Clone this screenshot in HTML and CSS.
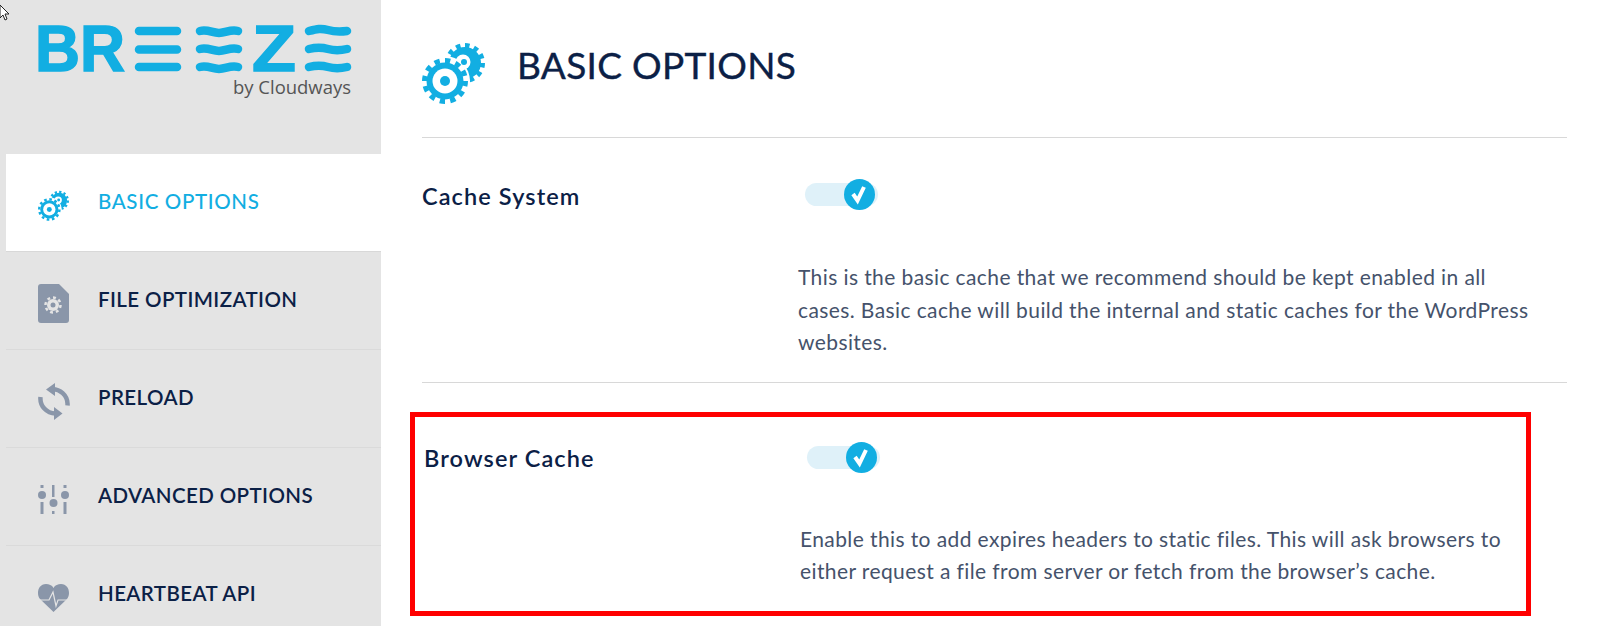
FILE: index.html
```html
<!DOCTYPE html>
<html lang="en">
<head>
    <meta charset="UTF-8">
    <title>Breeze - Basic Options</title>
    <link rel="stylesheet" href="styles.css">
</head>
<body>
    <!-- shared gear icon -->
    <svg class="defs" width="0" height="0">
        <symbol id="gears" viewBox="0 0 63 62">
            <circle cx="43" cy="21" r="16" fill="#12aee2"/>
            <circle cx="43" cy="21" r="17.500" fill="none" stroke="#12aee2" stroke-width="5" pathLength="24" stroke-dasharray="1 1"/>
            <circle cx="23" cy="39" r="25" fill="#fff"/>
            <circle cx="41" cy="20" r="7.500" fill="#fff"/>
            <circle cx="42" cy="20" r="3" fill="#12aee2"/>
            <circle cx="23" cy="39" r="18.500" fill="#12aee2"/>
            <circle cx="23" cy="39" r="20.500" fill="none" stroke="#12aee2" stroke-width="5" pathLength="24" stroke-dasharray="1 1"/>
            <circle cx="23" cy="39" r="12.500" fill="#fff"/>
            <circle cx="23" cy="39" r="5" fill="#12aee2"/>
        </symbol>
    </svg>

    <svg class="cursor" viewBox="0 0 9 17" width="9" height="17">
        <path d="M0 0v13l3-3 2 5 2-1-2-5h4z" fill="#fff" stroke="#222" stroke-width="1"/>
    </svg>

    <div class="page">
        <aside class="sidebar">
            <div class="logo">
                <svg width="328" height="96" viewBox="-8 0 328 96">
                    <text class="logo-mark" x="-3" y="63" textLength="90" lengthAdjust="spacingAndGlyphs">BR</text>
                    <g fill="none" stroke="#12aee2" stroke-width="8.5" stroke-linecap="round">
                        <path d="M101 23h38M101 41.500h38M101 59h38"/>
                        <path d="M162 23c8-2 12 2 19 2s11-4 19-2M162 41c8-2 12 2 19 2s11-4 19-2M162 59c8-2 12 2 19 2s11-4 19-2"/>
                        <path d="M271 23c8-2 12-3 19-1s11 2 19 1M271 41c8-2 12-2 19 0s11 2 19 0M271 59c8-2 12-2 19 0s11 2 19 0"/>
                    </g>
                    <text class="logo-mark" x="214" y="63" textLength="44" lengthAdjust="spacingAndGlyphs">Z</text>
                    <text class="logo-by" x="195" y="86" textLength="118" lengthAdjust="spacingAndGlyphs">by Cloudways</text>
                </svg>
            </div>
            <nav class="nav">
                <a class="nav-item active">
                    <span class="nav-icon"><svg width="31" height="31"><use href="#gears"/></svg></span>
                    <span>BASIC OPTIONS</span>
                </a>
                <a class="nav-item">
                    <span class="nav-icon">
                        <svg width="31" height="39" viewBox="0 0 31 39">
                            <path d="M3 0h18l10 10v26a3 3 0 0 1-3 3H3a3 3 0 0 1-3-3V3a3 3 0 0 1 3-3z" fill="#8a96a9"/>
                            <circle cx="15" cy="21" r="6" fill="#e4e4e4"/>
                            <circle cx="15" cy="21" r="7.500" fill="none" stroke="#e4e4e4" stroke-width="2.500" pathLength="16" stroke-dasharray="1 1"/>
                            <circle cx="15" cy="21" r="2.500" fill="#8a96a9"/>
                        </svg>
                    </span>
                    <span>FILE OPTIMIZATION</span>
                </a>
                <a class="nav-item">
                    <span class="nav-icon">
                        <svg width="32" height="39" viewBox="0 0 32 39">
                            <g fill="none" stroke="#8a96a9" stroke-width="4.500">
                                <path d="M12 7.500a15 15 0 0 1 17.500 16"/>
                                <path d="M2.500 15a15 15 0 0 0 15 16.500"/>
                            </g>
                            <path d="M8 7.500L17 1v13zM24.500 31.500L16 25v13z" fill="#8a96a9"/>
                        </svg>
                    </span>
                    <span>PRELOAD</span>
                </a>
                <a class="nav-item">
                    <span class="nav-icon">
                        <svg width="31" height="29" viewBox="0 0 31 29">
                            <g fill="#8a96a9">
                                <rect x="2.500" y="0" width="3" height="3"/>
                                <circle cx="4" cy="10" r="4"/>
                                <rect x="2.500" y="17" width="3" height="12"/>
                                <rect x="14" y="0" width="2.500" height="12"/>
                                <circle cx="15.500" cy="18" r="4"/>
                                <rect x="14" y="26" width="2.500" height="3"/>
                                <rect x="25.500" y="0" width="3" height="3"/>
                                <circle cx="27" cy="10" r="4"/>
                                <rect x="25.500" y="17" width="3" height="12"/>
                            </g>
                        </svg>
                    </span>
                    <span>ADVANCED OPTIONS</span>
                </a>
                <a class="nav-item">
                    <span class="nav-icon">
                        <svg width="31" height="28" viewBox="0 0 31 28">
                            <path d="M15.500 28L2 15C-2 10 0 0 8 0c3 0 6 1 7.500 4C17 1 20 0 23 0c8 0 10 10 6 15z" fill="#8a96a9"/>
                            <path d="M2 16h9l4-8 3 14 2-6h10" fill="none" stroke="#e4e4e4" stroke-width="1.200"/>
                        </svg>
                    </span>
                    <span>HEARTBEAT API</span>
                </a>
            </nav>
        </aside>

        <main class="content">
            <header class="head">
                <svg width="63" height="62"><use href="#gears"/></svg>
                <h1>BASIC OPTIONS</h1>
            </header>

            <section class="option">
                <div class="option-row">
                    <label class="option-name">Cache System</label>
                    <span class="toggle"><svg class="knob" width="31" height="31" viewBox="0 0 31 31"><circle cx="15.500" cy="15.500" r="15.500" fill="#12aee2"/><path d="M9 15l4.500 6.500L20 8" fill="none" stroke="#fff" stroke-width="4"/></svg></span>
                </div>
                <p class="option-desc">This is the basic cache that we recommend should be kept enabled in all cases. Basic cache will build the internal and static caches for the WordPress websites.</p>
            </section>

            <section class="option marked">
                <div class="option-row">
                    <label class="option-name">Browser Cache</label>
                    <span class="toggle"><svg class="knob" width="31" height="31" viewBox="0 0 31 31"><circle cx="15.500" cy="15.500" r="15.500" fill="#12aee2"/><path d="M9 15l4.500 6.500L20 8" fill="none" stroke="#fff" stroke-width="4"/></svg></span>
                </div>
                <p class="option-desc">Enable this to add expires headers to static files. This will ask browsers to either request a file from server or fetch from the browser’s cache.</p>
            </section>
        </main>
    </div>
</body>
</html>
```

FILE: styles.css
```css
html, body {
    margin: 0;
    height: 626px;
    overflow: hidden;
    background: white;
}
body {
    font-family: Lato, 'Open Sans', sans-serif;
    color: #0b2046;
}
.defs {
    position: absolute;
}
.cursor {
    position: absolute;
    left: 0;
    top: 5px;
}
.page {
    display: flex;
    height: 626px;
}

/* sidebar */
.sidebar {
    width: 381px;
    flex: none;
    background: #e4e4e4;
    overflow: hidden;
}
.logo {
    height: 154px;
    padding: 8px 0 0 30px;
    box-sizing: border-box;
}
.logo svg {
    display: block;
}
.logo-mark {
    font-family: 'Liberation Sans', sans-serif;
    font-weight: 700;
    font-size: 65px;
    fill: #12aee2;
    stroke: #12aee2;
    stroke-width: 1.5px;
}
.logo-by {
    font-family: 'Open Sans', sans-serif;
    font-weight: 500;
    font-size: 18px;
    fill: #555;
}
.nav {
    margin-left: 6px;
}
.nav-item {
    display: flex;
    align-items: center;
    height: 93px;
    border-bottom: 1px solid #dadada;
    padding: 0 0 4px 32px;
    font-size: 20.500px;
    font-weight: 600;
    letter-spacing: 0.4px;
}
.nav-item.active {
    background: white;
    color: #12aee2;
    font-weight: 500;
    letter-spacing: 0.65px;
    border-bottom-color: #d8d8d8;
}
.nav-icon {
    width: 61px;
    margin-right: -1px;
    flex: none;
    display: flex;
    align-items: center;
    padding-top: 10px;
}

/* main panel */
.content {
    flex: 1;
    min-width: 0;
    padding: 0 32px 0 41px;
}
.head {
    display: flex;
    align-items: flex-start;
    height: 95px;
    padding-top: 42px;
    border-bottom: 1px solid #d8d8d8;
}
.head h1 {
    margin: 2px 0 0 32px;
    font-size: 37px;
    font-weight: 400;
    line-height: 42px;
    letter-spacing: 0.3px;
    -webkit-text-stroke: 0.4px #0b2046;
}
.option {
    padding: 41px 0 23px;
    border-bottom: 1px solid #d8d8d8;
}
.option-row {
    display: flex;
    align-items: center;
    height: 31px;
}
.option-name {
    width: 383px;
    font-size: 23.500px;
    font-weight: 600;
    padding-top: 2px;
    letter-spacing: 1.1px;
}
.toggle {
    position: relative;
    width: 73px;
    height: 23px;
    border-radius: 12px;
    background: #dff1f9;
}
.knob {
    position: absolute;
    right: 3px;
    top: -4px;
}
.option-desc {
    width: 740px;
    margin: 51px 0 0 376px;
    font-size: 21px;
    line-height: 32.500px;
    letter-spacing: 0.4px;
    color: #45526b;
}
.marked {
    margin: 29px 36px 0 -12px;
    padding: 25px 0 23px 9px;
    border: 5px solid red;
}
.marked .option-desc {
    width: 715px;
    margin-top: 50px;
}
```
